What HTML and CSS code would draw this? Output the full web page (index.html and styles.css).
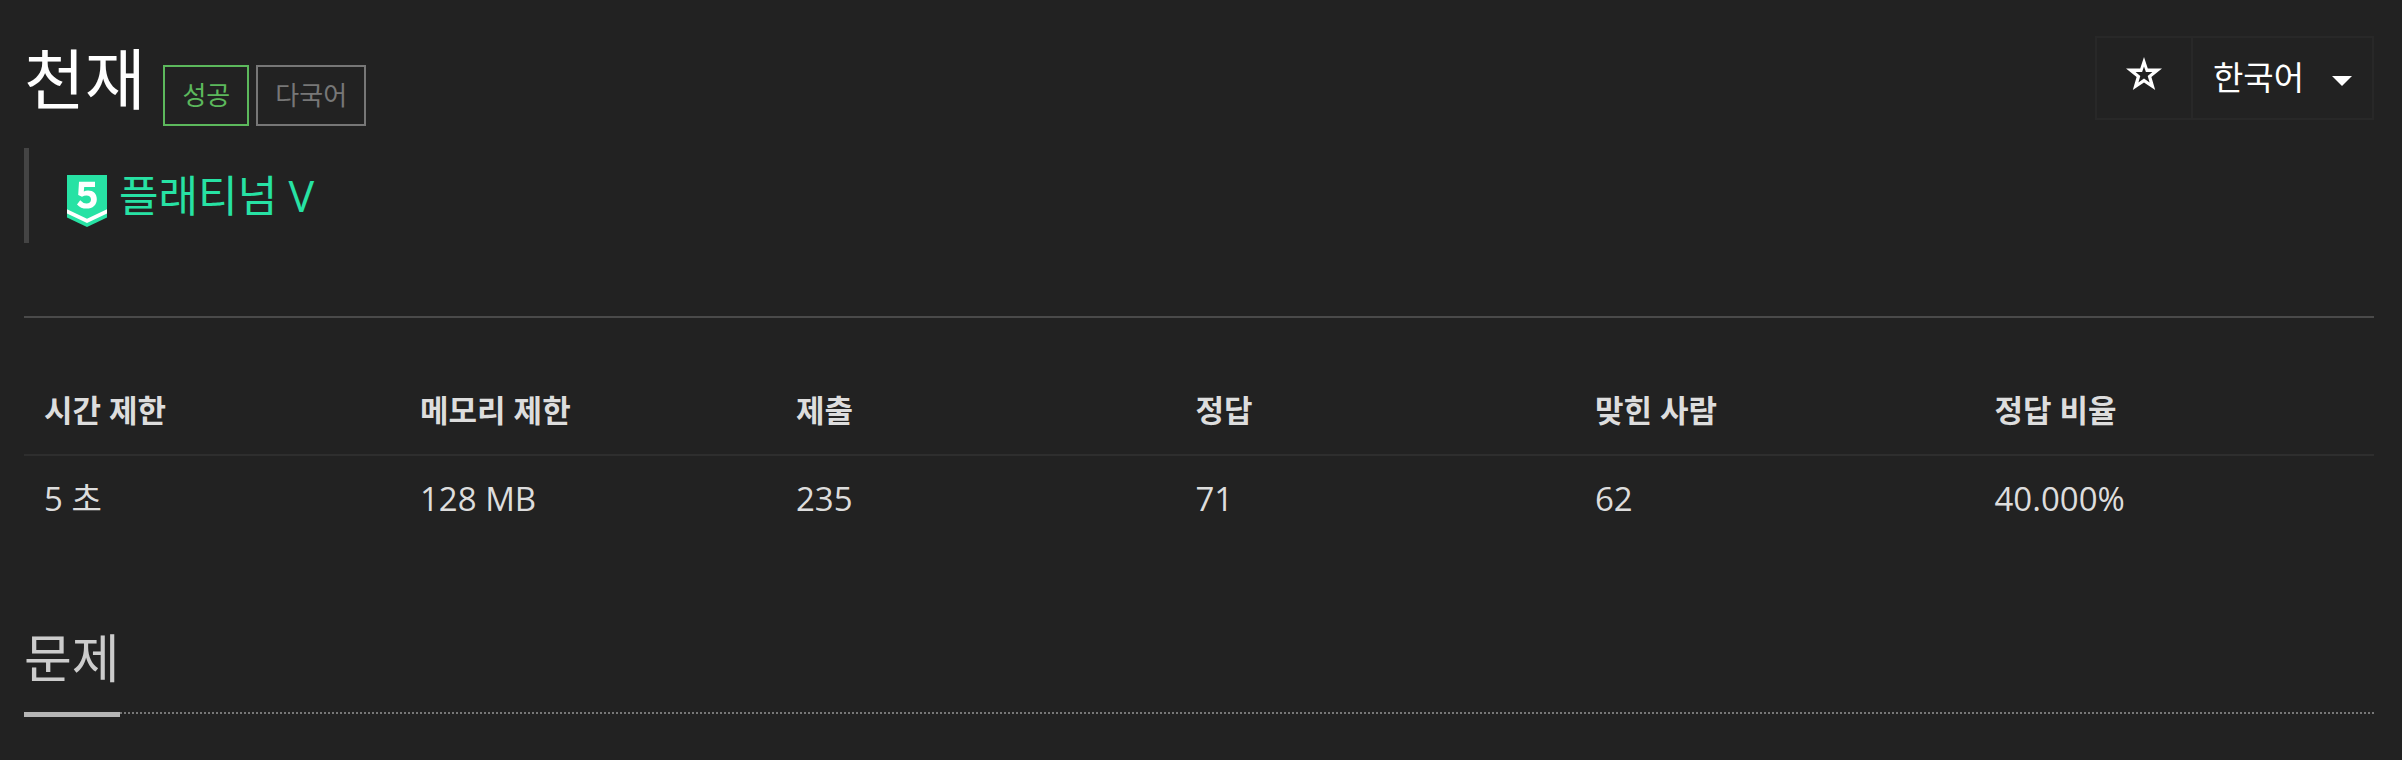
FILE: index.html
```html
<!DOCTYPE html>
<html lang="ko">
<head>
<meta charset="utf-8">
<title>천재</title>
<link rel="stylesheet" href="styles.css">
</head>
<body>
<main class="page">
  <header class="page-header">
    <div class="heading">
      <h1 class="title">천재</h1>
      <div class="labels">
        <span class="label label-success">성공</span>
        <span class="label label-muted">다국어</span>
      </div>
    </div>
    <div class="button-group">
      <button class="button button-star" type="button" aria-label="즐겨찾기">
        <svg class="star" viewBox="0 0 36 34" aria-hidden="true"><path fill="#fff" fill-rule="evenodd" d="M18 0l3.8 11.4H36L25.4 20 29.2 33 18 25.4 6.8 33l3.8-13L0 11.4h14.2zM18 9.6l-1.9 5.4H9.6l4.7 4-1.9 6.4 5.6-4 5.6 4-1.9-6.4 4.7-4h-6.5z"/></svg>
      </button>
      <button class="button button-language" type="button" aria-haspopup="true"><span class="language">한국어</span><span class="caret"></span></button>
    </div>
  </header>

  <blockquote class="tier">
    <svg class="tier-badge" viewBox="0 0 40 52" role="img" aria-label="5">
      <path fill="#27e2a4" d="M0 0h40v42.5L20 52 0 42.5z"/>
      <path fill="#fff" d="M0 34.3L20 43.8l20-9.5v4.2L20 48 0 38.5z"/>
      <path fill="#fff" d="M12 6.8h16v5.2H17.2l-.4 4.6Q18.6 15.6 21 15.6C26.4 15.6 29.8 19 29.8 24.2C29.8 29.8 25.8 33.6 19.6 33.6Q13.6 33.6 10 29.4L13.2 25.2Q16 28.4 19.4 28.4C22.2 28.4 24 26.8 24 24.4C24 22 22.2 20.4 19.4 20.4Q17.2 20.4 15 21.8L11.2 20z"/>
    </svg>
    <span class="tier-name">플래티넘 V</span>
  </blockquote>

  <hr class="rule">

  <table class="info">
    <thead>
      <tr>
        <th class="col-limit" scope="col">시간 제한</th>
        <th class="col-limit" scope="col">메모리 제한</th>
        <th scope="col">제출</th>
        <th scope="col">정답</th>
        <th scope="col">맞힌 사람</th>
        <th scope="col">정답 비율</th>
      </tr>
    </thead>
    <tbody>
      <tr>
        <td>5 초</td>
        <td>128 MB</td>
        <td>235</td>
        <td>71</td>
        <td>62</td>
        <td>40.000%</td>
      </tr>
    </tbody>
  </table>

  <section class="problem">
    <div class="headline"><h2 class="headline-text">문제</h2></div>
  </section>
</main>
</body>
</html>
```

FILE: styles.css
```css
* {
  box-sizing: border-box;
}

body {
  margin: 0;
  background: #222;
  color: #ddd;
  font-family: "Open Sans", "Noto Sans CJK KR", sans-serif;
  font-size: 33px;
}

.page {
  padding: 36px 28px 40px 24px;
}

.page-header {
  display: flex;
  justify-content: space-between;
  align-items: flex-start;
}

.heading {
  display: flex;
  align-items: flex-end;
  gap: 18px;
}

.title {
  margin: 0;
  padding-bottom: 6px;
  color: #fff;
  font-size: 66px;
  font-weight: 400;
  line-height: 84px;
}

.labels {
  display: flex;
  gap: 7px;
}

.label {
  padding: 0 17px;
  border: 2px solid;
  font-size: 26px;
  line-height: 57px;
}

.label-success {
  color: #5cb85c;
}

.label-muted {
  color: #777;
}

.button-group {
  display: flex;
}

.button {
  display: flex;
  align-items: center;
  height: 84px;
  border: 2px solid #282828;
  background: #222;
  color: #fff;
  font: inherit;
}

.button-star {
  padding: 0 29px;
  border-right: 0;
}

.star {
  width: 36px;
  height: 34px;
  margin-bottom: 8px;
}

.button-language {
  gap: 28px;
  padding: 0 20px;
}

.language {
  padding-bottom: 4px;
}

.caret {
  border: 10px solid transparent;
  border-top-color: #fff;
  border-bottom: 0;
  margin-top: 6px;
}

.tier {
  display: flex;
  align-items: center;
  gap: 12px;
  height: 95px;
  margin: 22px 0 0;
  padding-left: 38px;
  border-left: 5px solid #444;
}

.tier-badge {
  width: 40px;
  height: 52px;
  margin-top: 10px;
}

.tier-name {
  color: #27e2a4;
  font-size: 43px;
  line-height: 60px;
}

.rule {
  margin: 73px 0 52px;
  border: 0;
  border-top: 2px solid #4a4a4a;
}

.info {
  width: 100%;
  border-collapse: collapse;
  table-layout: fixed;
  line-height: 44px;
}

.info th,
.info td {
  padding: 21px 20px 19px;
  text-align: left;
}

.info th {
  padding: 18px 20px 22px;
  border-bottom: 2px solid #2e2e2e;
  font-size: 31px;
  font-weight: 700;
}

.col-limit {
  width: 16%;
}

.problem {
  margin-top: 80px;
}

.headline {
  border-bottom: 2px dotted #777;
}

.headline-text {
  display: inline-block;
  margin: 0 0 -5px;
  padding-bottom: 16px;
  border-bottom: 5px solid #b5b5b5;
  color: #ccc;
  font-size: 52px;
  font-weight: 400;
  line-height: 76px;
  vertical-align: bottom;
}
```
